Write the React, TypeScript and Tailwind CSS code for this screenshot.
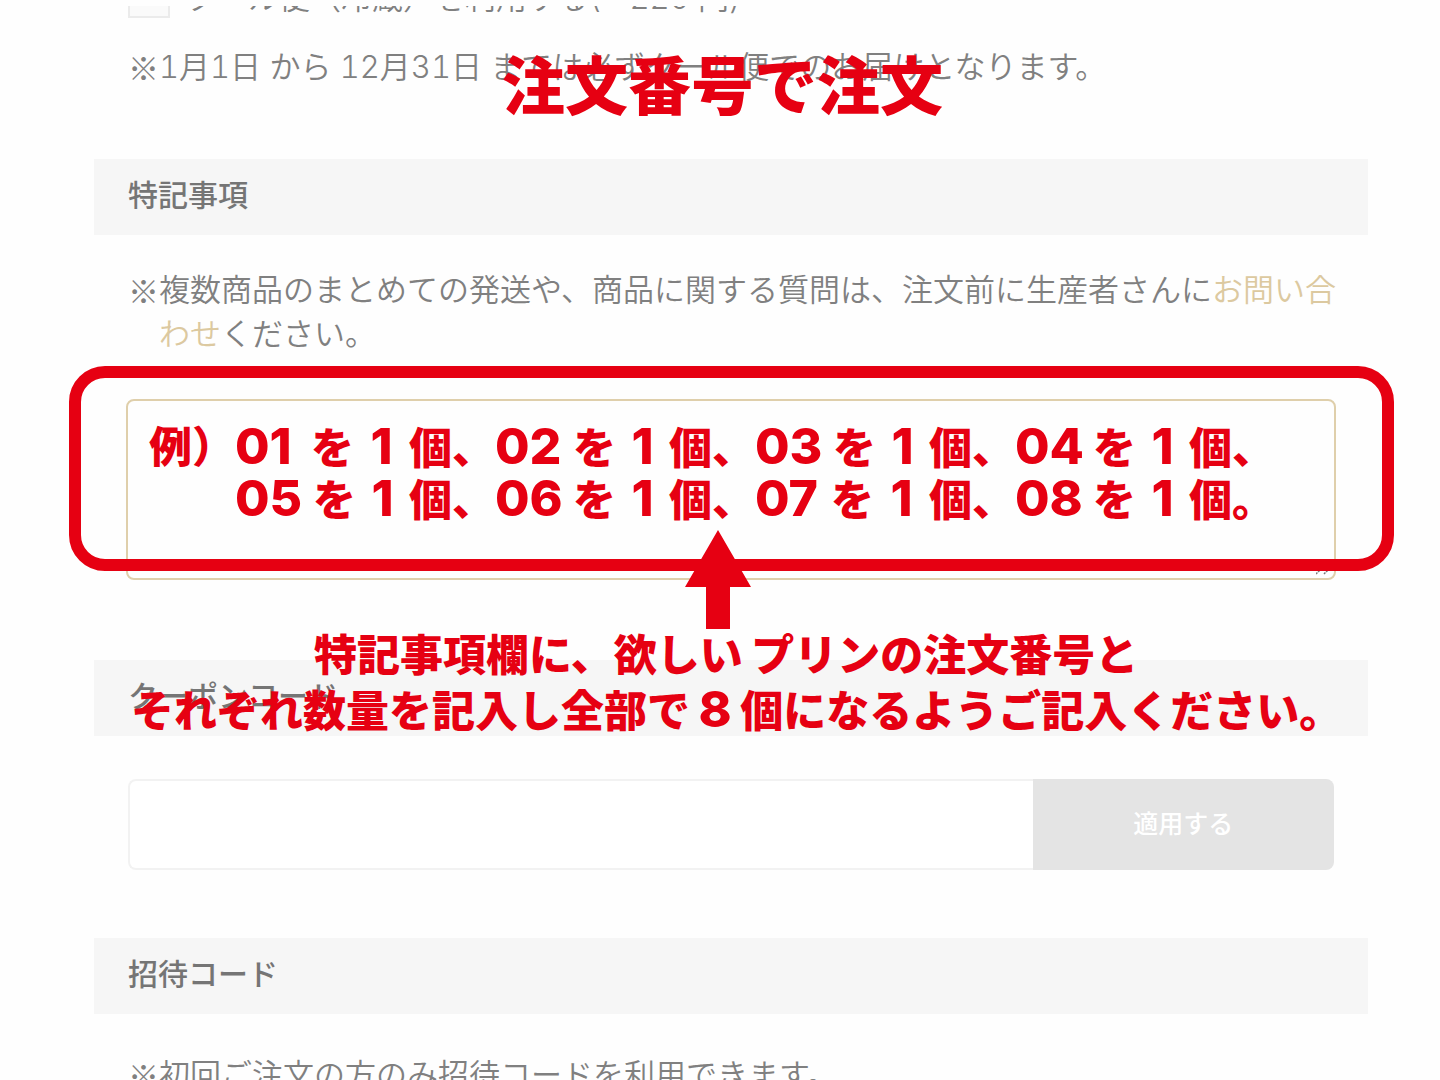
import type { ReactNode } from 'react';

const orderLines = [
  ['01', '02', '03', '04'],
  ['05', '06', '07', '08'],
];

function SectionHeading({ children, htmlFor }: { children: ReactNode; htmlFor?: string }) {
  return (
    <h2 className="flex h-[76px] items-center bg-[#f6f6f6] px-[34px] pb-1 text-[30px] font-medium text-[#757575]">
      {htmlFor ? <label htmlFor={htmlFor}>{children}</label> : children}
    </h2>
  );
}

function Note({ children }: { children: ReactNode }) {
  return (
    <div className="flex pr-6 pl-[34px] text-[31px] leading-[44px] font-[350] text-[#808080]">
      <span className="font-['Noto_Sans_CJK_JP',sans-serif]">※</span>
      <p className="min-w-0 flex-1 tabular-nums">{children}</p>
    </div>
  );
}

function OrderExample() {
  return (
    <div className="absolute top-[22px] left-[23px] flex text-[43px] leading-[52px] font-black whitespace-nowrap text-[#e60012]">
      <span className="w-[86px]">例）</span>
      <div>
        {orderLines.map((line, row) => (
          <div key={row} className="flex h-[52px]">
            {line.map((no, i) => (
              <span key={no} className="flex w-[260px] items-baseline gap-3">
                <span className="w-[66px] text-[50px] leading-none font-extrabold">{no}</span>
                <span>を</span>
                <span className="w-8 text-center text-[50px] leading-none font-extrabold">1</span>
                <span>個{row === 1 && i === line.length - 1 ? '。' : '、'}</span>
              </span>
            ))}
          </div>
        ))}
      </div>
    </div>
  );
}

export default function App() {
  return (
    <div className="relative h-screen overflow-hidden bg-[#fefefe] font-['Inter','Noto_Sans_CJK_JP',sans-serif]">
      <main className="pt-[6px] pr-[72px] pl-[94px]">
        {/* Scrolled row, only its lower edge shows */}
        <label className="flex h-[12px] items-end gap-4 overflow-hidden pl-[34px] text-[31px] leading-[40px] font-[350] text-[#808080]">
          <input
            type="checkbox"
            className="h-[42px] w-[42px] shrink-0 appearance-none border-2 border-[#ebebeb] bg-[#fafafa]"
          />
          <span className="tabular-nums">クール便（冷蔵）を利用する(+ 220 円)</span>
        </label>

        <div className="pt-[27px]">
          <Note>1月1日 から 12月31日 までは必ずクール便でのお届けとなります。</Note>
        </div>

        <section className="pt-[70px]">
          <SectionHeading htmlFor="remarks">特記事項</SectionHeading>
          <div className="pt-[33px]">
            <Note>
              複数商品のまとめての発送や、商品に関する質問は、注文前に生産者さんに
              <a href="#contact" className="text-[#dcc9a0]">
                お問い合わせ
              </a>
              ください。
            </Note>
          </div>
          <div className="relative z-10 mx-8 mt-[43px]">
            <textarea
              id="remarks"
              className="block h-[181px] w-full resize-none rounded-lg border-2 border-[#dfcfab] bg-transparent"
            />
            <svg className="absolute right-1 bottom-1 h-4 w-4" viewBox="0 0 16 16" stroke="#777" strokeWidth="1.5" strokeDasharray="2 1">
              <path d="M0 14L14 0M8 14L14 8" />
            </svg>
            <div className="absolute -top-[33px] -right-[58px] -left-[57px] h-[205px] rounded-[36px] border-12 border-[#e60012]" />
            <OrderExample />
            <svg className="absolute top-[131px] left-[559px] h-[99px] w-[66px]" viewBox="0 0 66 99" fill="#e60012">
              <path d="M33 0L66 57H45V99H21V57H0Z" />
            </svg>
            <p className="absolute top-[228px] left-[5px] text-[43px] leading-[56px] font-black whitespace-nowrap text-[#e60012]">
              <span className="block pl-[183px]">特記事項欄に、欲しい プリンの注文番号と</span>
              それぞれ数量を記入し全部で <span className="text-[50px] leading-none font-extrabold">8</span> 個になるようご記入ください。
            </p>
          </div>
        </section>

        <section className="pt-20">
          <SectionHeading htmlFor="coupon">クーポンコード</SectionHeading>
          <div className="mx-[34px] mt-[43px] flex h-[91px]">
            <input
              id="coupon"
              type="text"
              className="min-w-0 flex-1 rounded-l-lg border-2 border-r-0 border-[#f2f2f2] bg-white px-4 text-2xl"
            />
            <button type="button" className="w-1/4 rounded-r-lg bg-[#e4e4e4] text-[25px] font-medium text-white">
              適用する
            </button>
          </div>
        </section>

        <section className="pt-[68px]">
          <SectionHeading>招待コード</SectionHeading>
          <div className="pt-[39px]">
            <Note>初回ご注文の方のみ招待コードを利用できます。</Note>
          </div>
        </section>
      </main>

      <h1 className="absolute top-[46px] left-[502px] z-10 text-[63px] leading-[80px] font-black whitespace-nowrap text-[#e60012]">
        注文番号で注文
      </h1>
    </div>
  );
}
